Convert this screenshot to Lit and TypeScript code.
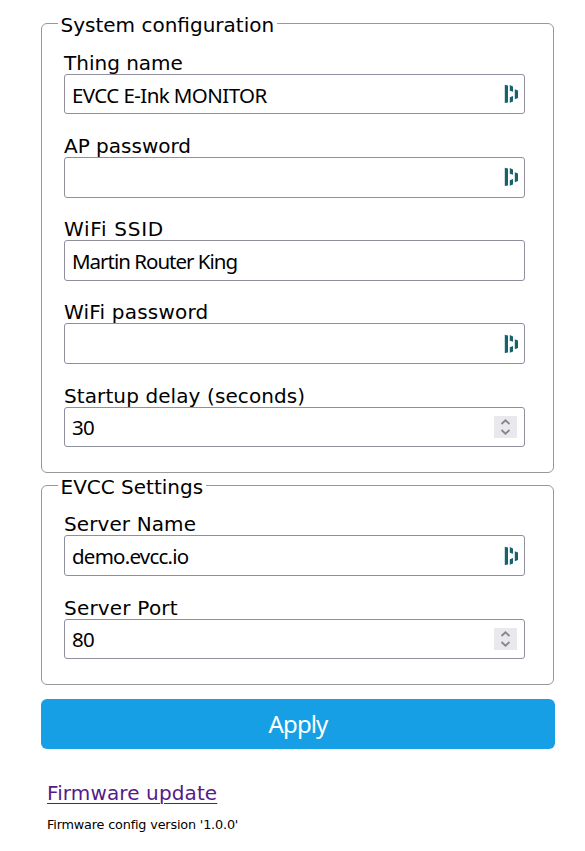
import { LitElement, html, css, svg, nothing } from "lit";
import { customElement, property } from "lit/decorators.js";

@customElement("config-field")
class ConfigField extends LitElement {
  @property() label = "";
  @property() value = "";
  @property() kind = "text";
  @property() tracking = "0";
  @property() valueTracking = "0";

  static styles = css`
    :host { display: block; height: 83.15px; }
    .label { height: 24px; line-height: 24px; font-size: 20px; white-space: nowrap; padding-top: 1px; margin-bottom: -1px; }
    .box {
      box-sizing: border-box; height: 40.4px; border: 1px solid #8f8f9d; border-radius: 3px;
      display: flex; align-items: center; justify-content: space-between;
      padding: 0 6px 0 7px; background: #fff;
    }
    .value { font-family: "Noto Sans", sans-serif; font-size: 20.5px; line-height: 28px; white-space: pre; padding-top: 1px; }
    svg { display: block; flex: none; }
    .spin { margin-right: 1px; }
  `;

  icon() {
    if (this.kind === "key")
      return svg`<svg width="14" height="20" viewBox="0 0 14 20" fill="#17626b">
        <path d="M.8 .8L4 1.4V18.4L.8 19zM5.8 1L9 2.4V7.8L5.8 6.8zM5.8 13.2L9 12V17.4L5.8 18.8zM10.8 5.2L14 6.4V14L10.8 15.2z"/></svg>`;
    if (this.kind === "number")
      return svg`<svg class="spin" width="23" height="22" viewBox="0 0 23 22">
        <path fill="#e9e9ed" d="M0 0h23v22H0z"/>
        <path fill="none" stroke="#85858c" stroke-width="1.8" d="M7.5 8L11.5 4.3L15.5 8M7.5 14L11.5 17.7L15.5 14"/></svg>`;
    return nothing;
  }

  render() {
    return html`<div class="label" style="letter-spacing:${this.tracking}px">${this.label}</div>
      <div class="box"><span class="value" style="letter-spacing:${this.valueTracking}px">${this.value}</span>${this.icon()}</div>`;
  }
}

@customElement("app-root")
class AppRoot extends LitElement {
  static styles = css`
    :host {
      display: block; box-sizing: border-box; height: 851px; overflow: hidden;
      padding: 11px 30px 0 41px; background: #fff; color: #000;
      font-family: "DejaVu Sans", sans-serif; font-size: 20px;
    }
    fieldset {
      box-sizing: border-box; width: 513px; margin: 0; border: 1px solid #98989c; border-radius: 6px;
      padding: 14px 28px 0 22px; height: 462px;
    }
    .second { height: 212px; padding-top: 13.45px; }
    legend { height: 25px; line-height: 28px; padding: 0 2.5px; margin-left: -6px; white-space: nowrap; }
    .apply {
      display: flex; align-items: center; justify-content: center; box-sizing: border-box;
      width: 514px; height: 50px; margin-top: 14px; border: 0; border-radius: 6px; padding: 0 0 1px;
      background: #179fe6; color: #fff; font: 24px "Noto Sans", sans-serif; letter-spacing: -0.9px;
    }
    .link { display: block; width: max-content; margin: 32px 0 0 6px; line-height: 24px; color: #551a8b; letter-spacing: 0.12px;
      text-decoration: underline; text-decoration-thickness: 1px; text-underline-offset: 3px; }
    .version { margin: 12px 0 0 6px; font-size: 12.8px; line-height: 16px; letter-spacing: -0.17px; }
  `;

  render() {
    return html`
      <fieldset>
        <legend>System configuration</legend>
        <config-field label="Thing name" value="EVCC E-Ink MONITOR" valueTracking="-0.58" kind="key"></config-field>
        <config-field label="AP password" kind="key"></config-field>
        <config-field label="WiFi SSID" tracking="0.7" value="Martin Router King" valueTracking="-1"></config-field>
        <config-field label="WiFi password" tracking="0.2" kind="key"></config-field>
        <config-field label="Startup delay (seconds)" tracking="0.1" value="30" valueTracking="-0.8" kind="number"></config-field>
      </fieldset>
      <fieldset class="second">
        <legend>EVCC Settings</legend>
        <config-field label="Server Name" tracking="0.1" value="demo.evcc.io" valueTracking="-0.77" kind="key"></config-field>
        <config-field label="Server Port" tracking="0.2" value="80" valueTracking="-0.8" kind="number"></config-field>
      </fieldset>
      <button class="apply">Apply</button>
      <a class="link">Firmware update</a>
      <div class="version">Firmware config version '1.0.0'</div>
    `;
  }
}
